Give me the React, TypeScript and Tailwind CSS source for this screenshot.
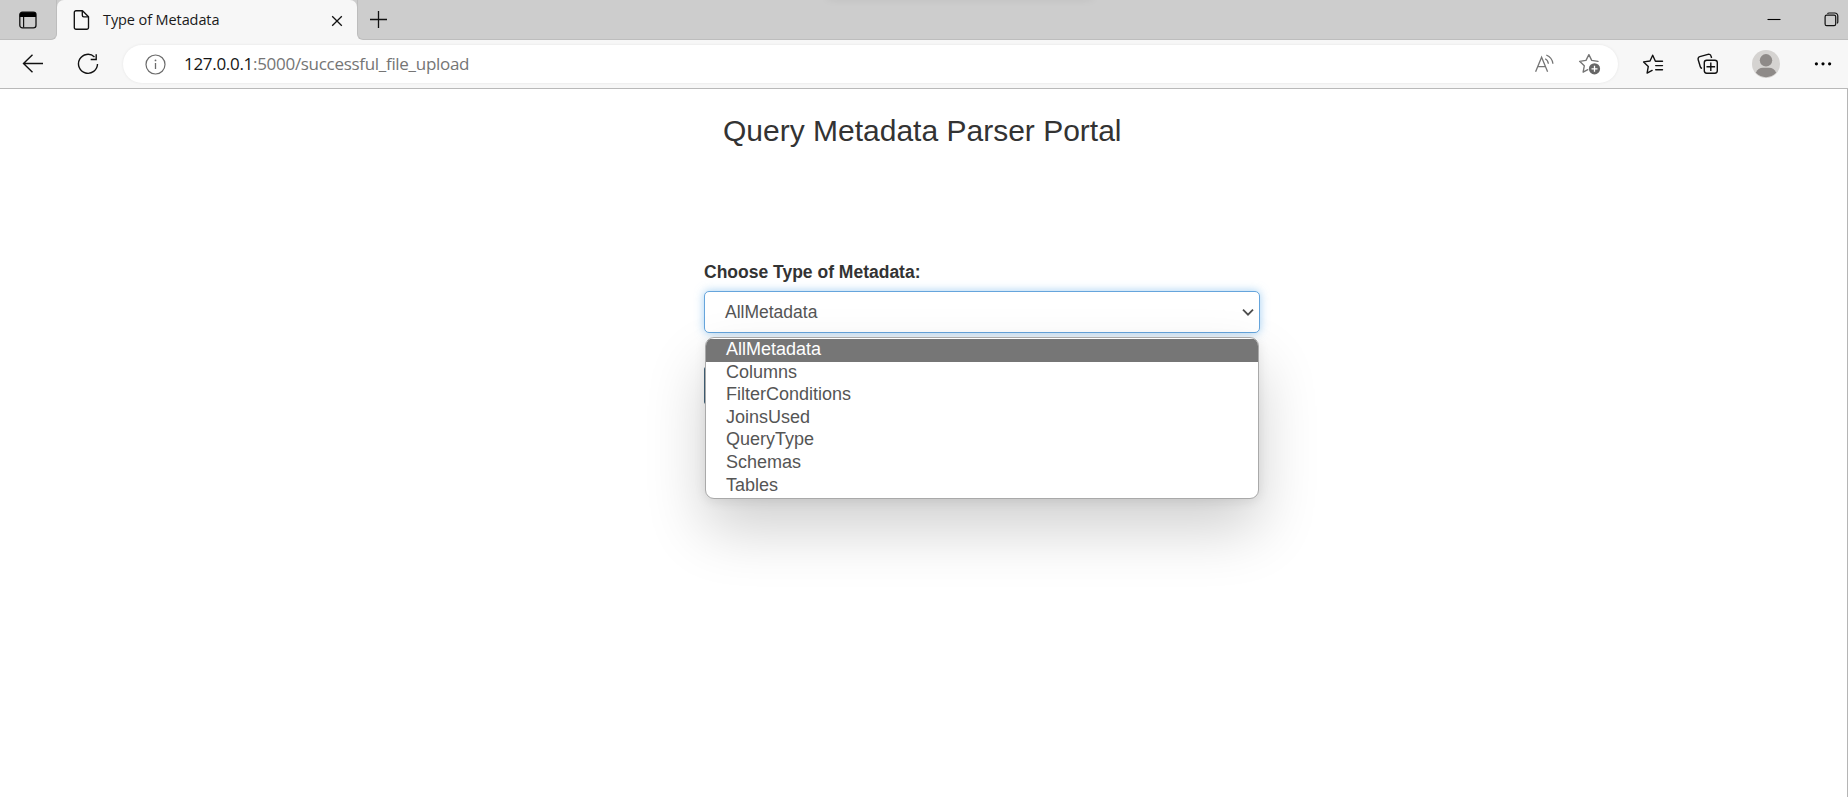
import React from "react";

const OPTIONS = ["AllMetadata", "Columns", "FilterConditions", "JoinsUsed", "QueryType", "Schemas", "Tables"];

function TabStrip() {
  return (
    <header className="relative flex h-10 bg-[#cdcdcd] font-['Open_Sans',sans-serif]">
      <div className="absolute left-[828px] top-[-8px] h-[6px] w-[264px] shadow-[0_0_10px_rgba(0,0,0,0.1)]" />
      <div className="flex h-10 w-[57px] bg-[#f7f7f7]">
        <div className="flex h-10 w-[57px] items-center rounded-br-[6px] border-b border-r border-[#bdbdbd] bg-[#cdcdcd] pl-[18px]">
          <svg width="20" height="20" viewBox="0 0 20 20" fill="none">
            <rect x="1.8" y="2.2" width="16.2" height="15.6" rx="2.6" stroke="#111" strokeWidth="1.3" />
            <path d="M1.8 7V4.8a2.6 2.6 0 0 1 2.6-2.6h11a2.6 2.6 0 0 1 2.6 2.6V7z" fill="#000" />
            <path d="M5.6 7v10.5" stroke="#111" strokeWidth="1.2" />
          </svg>
        </div>
      </div>
      <div className="flex w-[300px] items-center rounded-t-[7px] bg-[#f7f7f7] pl-[16px]">
        <svg width="17" height="22" viewBox="0 0 17 22" fill="none" stroke="#111" strokeWidth="1.35">
          <path d="M3 1.7h6.5l6 6v10.8a1.7 1.7 0 0 1-1.7 1.7H3a1.7 1.7 0 0 1-1.7-1.7V3.4A1.7 1.7 0 0 1 3 1.7z" strokeLinejoin="round" />
          <path d="M9.3 1.9v4.4a1.5 1.5 0 0 0 1.5 1.5h4.6" />
        </svg>
        <span className="ml-[13px] w-[216px] whitespace-nowrap text-[14.5px] leading-5 tracking-[-0.1px] text-[#1a1a1a]">Type of Metadata</span>
        <svg className="ml-[12px] mt-[1px] shrink-0" width="12" height="12" viewBox="0 0 12 12" fill="none" stroke="#111" strokeWidth="1.3">
          <path d="M1.2 1.2l9.6 9.6M10.8 1.2L1.2 10.8" />
        </svg>
      </div>
      <div className="flex h-10 flex-1 bg-[linear-gradient(90deg,#f7f7f7_0,#f7f7f7_8px,transparent_8px)]">
        <div className="flex h-10 flex-1 items-center rounded-bl-[6px] border-b border-l border-[#bdbdbd] bg-[linear-gradient(90deg,#cdcdcd_0,#cdcdcd_10px,transparent_10px)] pl-[11px]">
          <svg width="19" height="19" viewBox="0 0 19 19" fill="none" stroke="#111" strokeWidth="1.3">
            <path d="M1 9.5h17M9.5 1v17" />
          </svg>
          <svg className="ml-auto mr-[43px]" width="14" height="14" viewBox="0 0 14 14" fill="none" stroke="#000" strokeWidth="1.1">
            <path d="M0.5 6.5h13" />
          </svg>
          <svg className="mr-[9px]" width="15" height="15" viewBox="0 0 15 15" fill="none" stroke="#111" strokeWidth="1.2">
            <rect x="1.1" y="3.1" width="10.6" height="10.6" rx="1.6" />
            <path d="M3.4 1.6Q4 1 5 1h5.8a3 3 0 0 1 3 3v5.8q0 1-.7 1.6" />
          </svg>
        </div>
      </div>
    </header>
  );
}

function Toolbar() {
  return (
    <nav className="flex h-[49px] items-center border-b border-[#b9b9b9] bg-[#f7f7f7] font-['Open_Sans',sans-serif]">
      <svg className="ml-[22px]" width="22" height="20" viewBox="0 0 22 20" fill="none" stroke="#111" strokeWidth="1.4">
        <path d="M21 9.5H1.5M10.5 0.7L1.5 9.5l9 8.8" />
      </svg>
      <svg className="ml-[33px]" width="22" height="22" viewBox="0 0 22 22" fill="none" stroke="#111" strokeWidth="1.4">
        <path d="M17.5 3.9A9.5 9.5 0 1 0 20.5 11" />
        <path d="M19.2 1.2v5.3h-5.5" />
      </svg>
      <div className="ml-[24px] flex h-[38px] w-[1495px] items-center rounded-full bg-white pl-[22px] shadow-[0_0_3px_rgba(0,0,0,0.08)]">
        <svg width="21" height="21" viewBox="0 0 21 21" fill="none">
          <circle cx="10.5" cy="10.5" r="9.5" stroke="#6b6b6b" strokeWidth="1.2" />
          <path d="M10.5 9v6" stroke="#6b6b6b" strokeWidth="1.3" />
          <circle cx="10.5" cy="6.4" r=".9" fill="#6b6b6b" />
        </svg>
        <span className="ml-[18px] mt-[-1px] whitespace-nowrap text-[17px] leading-6 tracking-[-0.3px] text-[#757575]"><span className="text-[#151515]">127.0.0.1</span>:5000/successful_file_upload</span>
        <svg className="ml-auto" width="20" height="20" viewBox="0 0 20 20" fill="none" stroke="#757575" strokeWidth="1.3">
          <path d="M1.6 17.7L7.6 3.2l6 14.5M3.8 12.6h7.6" />
          <path d="M11.2 4.8q2.8 1.5 3.2 5M12.3 1q6 2.5 6.6 8.8" />
        </svg>
        <svg className="ml-[24px] mr-[17px]" width="23" height="22" viewBox="0 0 23 22">
          <path d="M20 8.3l-6.3-.9L10.9 1.6 8 7.4l-6.4.9 4.7 4.5-1.2 6.4 4.7-2.5" fill="none" stroke="#757575" strokeWidth="1.35" strokeLinejoin="round" strokeLinecap="round" />
          <circle cx="16.5" cy="15.8" r="5.6" fill="#666" />
          <path d="M16.5 12.8v6M13.5 15.8h6" stroke="#fff" strokeWidth="1.3" />
        </svg>
      </div>
      <svg className="ml-[24px]" width="22" height="21" viewBox="0 0 22 21" fill="none" stroke="#111" strokeWidth="1.4" strokeLinejoin="round" strokeLinecap="round">
        <path d="M20.5 7.2h-7.1L10.7 1.2 8 7l-6.4.9 4.7 4.5-1.2 6.7 5-2.7M13.7 11.6h6.8M13.7 15.8h6.8" />
      </svg>
      <svg className="ml-[33px]" width="22" height="22" viewBox="0 0 22 22" fill="none" stroke="#111" strokeWidth="1.4">
        <rect x="7.3" y="7.2" width="13" height="13" rx="2.4" />
        <path d="M13.8 9.5v8.6M9.5 13.7h8.6" />
        <path d="M5.1 15.4A2.5 2.5 0 0 1 3.3 13.7L1.2 6.8A2.4 2.4 0 0 1 2.8 3.7l8.2-2.4a2.4 2.4 0 0 1 3 1.7l.6 2" />
      </svg>
      <svg className="ml-[33px]" width="28" height="28" viewBox="0 0 28 28">
        <circle cx="14" cy="14" r="14" fill="#d5d3d1" />
        <circle cx="14" cy="10.3" r="6.2" fill="#8e8a88" />
        <path d="M3.8 22.8Q6 17.8 11 17.8h6q5 0 7.2 5A14 14 0 0 1 3.8 22.8z" fill="#8e8a88" />
      </svg>
      <svg className="ml-[34px]" width="18" height="4" viewBox="0 0 18 4" fill="#000">
        <circle cx="2.4" cy="1.8" r="1.6" /><circle cx="9" cy="1.8" r="1.6" /><circle cx="15.6" cy="1.8" r="1.6" />
      </svg>
    </nav>
  );
}

export default function App() {
  return (
    <div className="flex h-[797px] w-[1848px] flex-col overflow-hidden bg-white">
      <TabStrip />
      <Toolbar />
      <main className="flex-1 border-r border-[#b5b5b5] font-['Liberation_Sans',Arial,sans-serif]">
        <h1 className="ml-[723px] mt-[25px] whitespace-nowrap text-[30px] leading-[33px] text-[#333]">Query Metadata Parser Portal</h1>
        <section className="relative ml-[704px] mt-[113px] w-[556px]">
          <p className="h-[31px] text-[17.5px] font-bold leading-[25px] text-[#333]">Choose Type of Metadata:</p>
          <div className="flex h-[42px] items-center justify-between rounded-[5px] border border-[#66a5dc] bg-white pl-[20px] pr-[5px] text-[17.5px] text-[#555] shadow-[0_0_10px_rgba(102,175,233,0.6)]">
            <span>AllMetadata</span>
            <svg width="12" height="8" viewBox="0 0 12 8" fill="none" stroke="#4d4d4d" strokeWidth="1.8">
              <path d="M1 1.7l5 5 5-5" />
            </svg>
          </div>
          <div className="mt-[34px] h-[37px] w-[80px] rounded-[2px] bg-[#44657c]" />
          <ul className="absolute left-[1px] top-[77px] w-[554px] overflow-hidden rounded-[9px] border border-[#a9a9a9] bg-white pb-[1px] pt-[1px] text-[18px] shadow-[0_30px_60px_rgba(0,0,0,0.19),0_2px_12px_rgba(0,0,0,0.09)]">
            {OPTIONS.map((o, i) => (
              <li key={o} className={i === 0 ? "h-[22.6px] bg-[#767676] pl-[20px] leading-[21.5px] text-white" : "h-[22.6px] pl-[20px] leading-[21.5px] text-[#555]"}>{o}</li>
            ))}
          </ul>
        </section>
      </main>
    </div>
  );
}
